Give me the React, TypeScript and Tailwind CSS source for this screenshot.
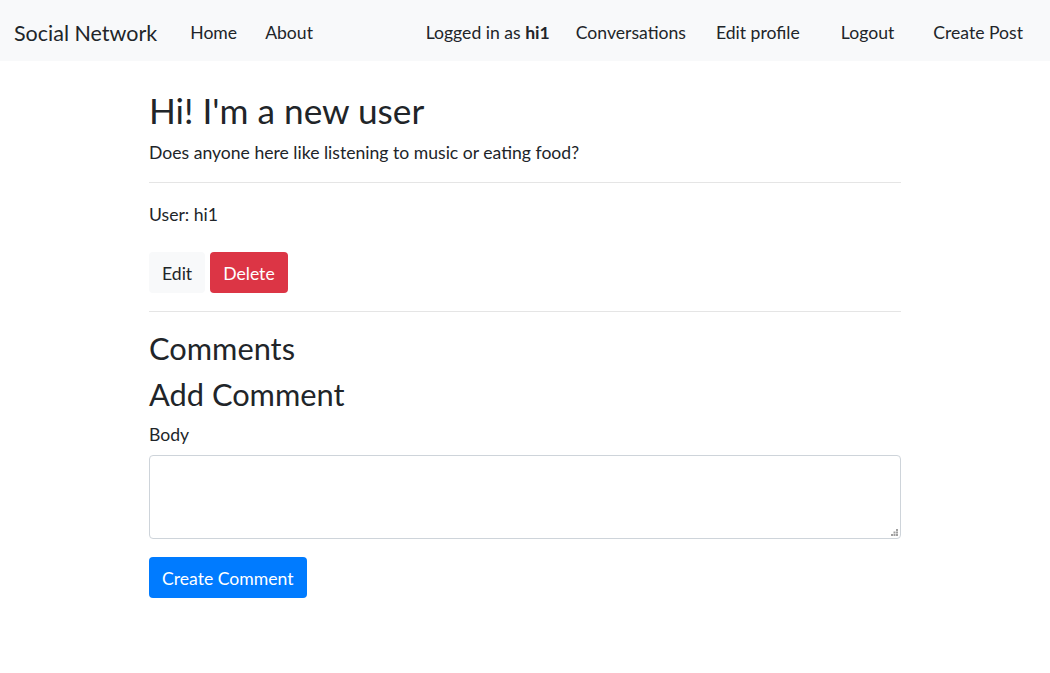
export default function App() {
  return (
    <div className="min-h-screen bg-white text-[#212529] font-['Lato',sans-serif]">
      <nav className="flex items-center h-[61px] bg-[#f8f9fa] pt-[5px] pl-[14px] pr-[27px] text-[17.6px]">
        <a className="text-[21.5px] text-[#212529]">Social Network</a>
        <a className="ml-[33px] text-[#212529]">Home</a>
        <a className="ml-[28px] text-[#212529]">About</a>
        <div className="ml-auto flex items-center">
          <span>
            Logged in as <b>hi1</b>
          </span>
          <a className="ml-[26px]">Conversations</a>
          <a className="ml-[30px]">Edit profile</a>
          <a className="ml-[41px]">Logout</a>
          <a className="ml-[39px]">Create Post</a>
        </div>
      </nav>

      <main className="w-[752px] mx-auto">
        <h2 className="mt-[27px] text-[35.2px] leading-[44px] font-normal">
          Hi! I'm a new user
        </h2>
        <p className="mt-[8px] text-[17.6px] leading-[26px]">
          Does anyone here like listening to music or eating food?
        </p>
        <hr className="mt-[16px] border-t border-[#e5e5e5]" />

        <p className="mt-[19px] text-[17.6px] leading-[26px]">User: hi1</p>

        <div className="mt-[24px] flex gap-[5px]">
          <button className="h-[41px] pt-[3px] px-[13px] rounded bg-[#f8f9fa] text-[#212529] text-[17.6px]">
            Edit
          </button>
          <button className="h-[41px] pt-[3px] px-[13px] rounded bg-[#dc3545] text-white text-[17.6px]">
            Delete
          </button>
        </div>

        <hr className="mt-[18px] border-t border-[#e5e5e5]" />

        <h3 className="mt-[19px] text-[30.8px] leading-[36px]">Comments</h3>
        <h3 className="mt-[10px] text-[30.8px] leading-[36px]">Add Comment</h3>

        <label className="block mt-[9px] text-[17.6px] leading-[26px]">Body</label>
        <div className="relative mt-[7px]">
          <textarea className="block w-full h-[84px] border border-[#ced4da] rounded px-3 py-1.5 text-[17.6px] resize-none focus:outline-none" />
          {/* resize grip */}
          <svg
            className="absolute right-[3px] bottom-[3px]"
            width="7"
            height="7"
            viewBox="0 0 7 7"
            fill="#a0a0a0"
          >
            <rect x="5" y="0" width="2" height="2" />
            <rect x="2.5" y="2.5" width="2" height="2" />
            <rect x="5" y="2.5" width="2" height="2" />
            <rect x="0" y="5" width="2" height="2" />
            <rect x="2.5" y="5" width="2" height="2" />
            <rect x="5" y="5" width="2" height="2" />
          </svg>
        </div>

        <button className="mt-[18px] h-[41px] pt-[3px] px-[13px] rounded bg-[#007bff] text-white text-[17.6px]">
          Create Comment
        </button>
      </main>
    </div>
  );
}
